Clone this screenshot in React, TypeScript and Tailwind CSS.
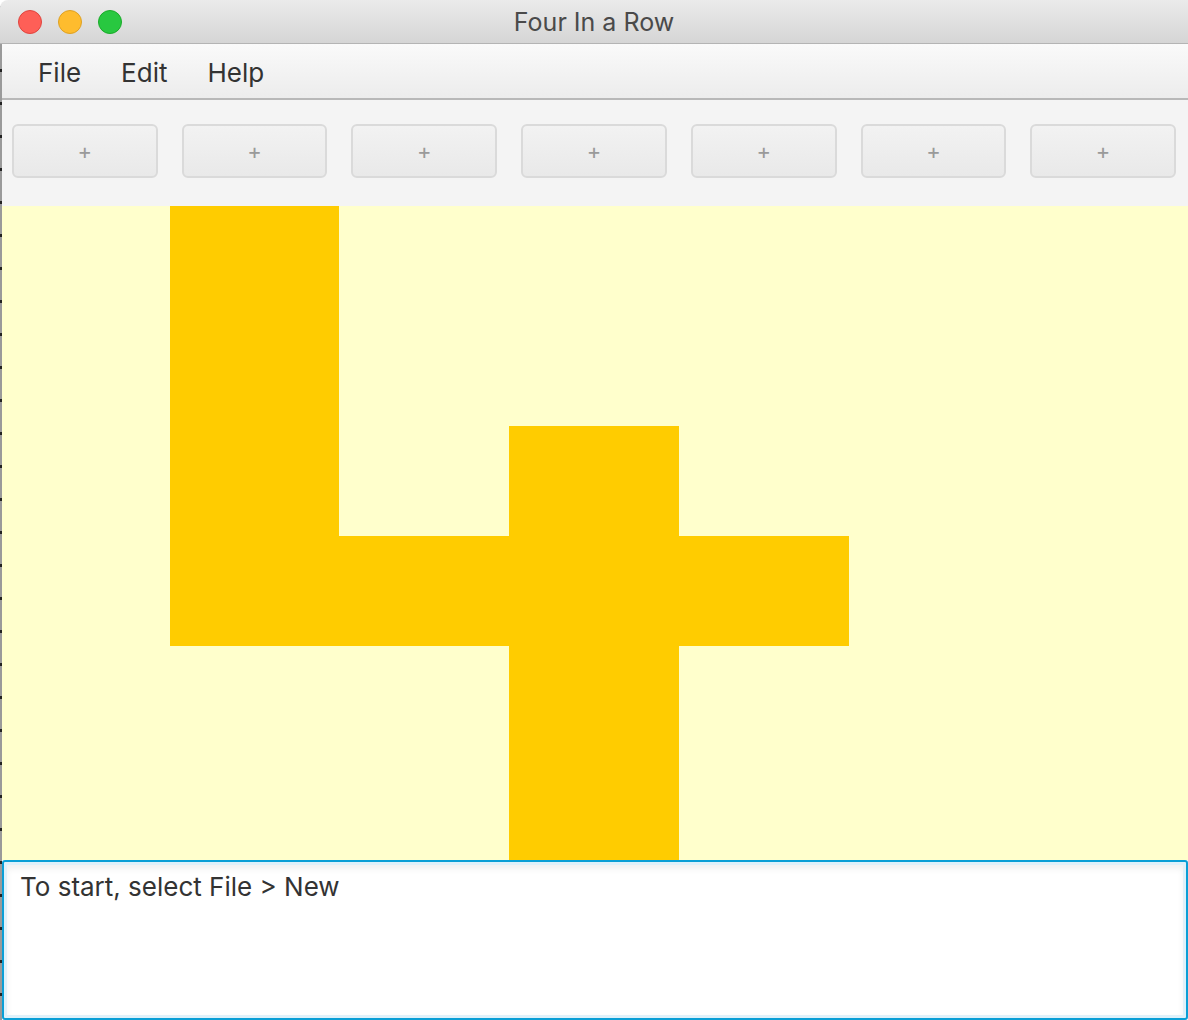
import React from "react";

const font = { fontFamily: '"Inter", "Open Sans", sans-serif' };

type Cell = [number, number];

// filled cells of the board, [column, row]
const filled: Cell[] = [
    [1, 0], [1, 1], [1, 2], [1, 3],
    [2, 3],
    [3, 2], [3, 3], [3, 4], [3, 5],
    [4, 3],
];

const isFilled = (c: number, r: number) => filled.some(([fc, fr]) => fc === c && fr === r);

const TrafficLights = () => (
    <div className="flex items-center gap-[16px] pl-[18px]">
        <span className="w-[24px] h-[24px] rounded-full bg-[#fe5f57] border border-[#e0443e]" />
        <span className="w-[24px] h-[24px] rounded-full bg-[#febc2e] border border-[#dea123]" />
        <span className="w-[24px] h-[24px] rounded-full bg-[#28c840] border border-[#1aab29]" />
    </div>
);

const ColumnButton = () => (
    <div className="px-[12px]">
        <button className="w-full h-[54px] rounded-[6px] border-2 border-[#dadada] bg-gradient-to-b from-[#f2f2f2] to-[#e9e9e9] text-[#9a9a9a] text-[22px] leading-none flex items-center justify-center">
            +
        </button>
    </div>
);

export default function App() {
    return (
        <div style={font} className="relative w-[1188px] h-[1020px] flex flex-col overflow-hidden bg-white">
            <div className="absolute left-0 top-[6px] bottom-0 w-[2px] bg-[repeating-linear-gradient(to_bottom,#9a9a9a_0px,#9a9a9a_30px,#222_30px,#222_33px)]" />
            <div className="relative h-[44px] flex items-center bg-gradient-to-b from-[#ebebeb] to-[#d5d5d5] border-b border-[#b4b4b4] rounded-tl-[8px]">
                <TrafficLights />
                <div className="absolute inset-0 pt-[3px] flex items-center justify-center text-[25px] text-[#4a4a4a]">
                    Four In a Row
                </div>
            </div>
            <div className="h-[56px] flex items-center gap-[40px] pl-[38px] pt-[2px] bg-gradient-to-b from-[#fafafa] to-[#ececec] border-b-2 border-[#b8b8b8] text-[26px] text-[#333]">
                <span>File</span>
                <span>Edit</span>
                <span>Help</span>
            </div>
            <div className="h-[106px] grid grid-cols-7 items-start pt-[24px] bg-[#f4f4f4]">
                {Array.from({ length: 7 }).map((_, i) => (
                    <ColumnButton key={i} />
                ))}
            </div>
            <div className="h-[654px] grid grid-cols-7 grid-rows-[repeat(6,110px)] bg-[#ffffcc] overflow-hidden">
                {Array.from({ length: 6 }).map((_, r) =>
                    Array.from({ length: 7 }).map((_, c) => (
                        <div key={`${r}-${c}`} className={isFilled(c, r) ? "bg-[#ffcc00]" : ""} />
                    ))
                )}
            </div>
            <div className="flex-1 ml-[2px] rounded-[3px] border-2 border-[#0a9fd6] p-[3px] bg-[#dff1fa]">
                <div className="h-full bg-white shadow-[inset_0_4px_6px_rgba(0,0,0,0.06)] px-[13px] pt-[2px] text-[26px] text-[#333]">
                    To start, select File &gt; New
                </div>
            </div>
        </div>
    );
}
